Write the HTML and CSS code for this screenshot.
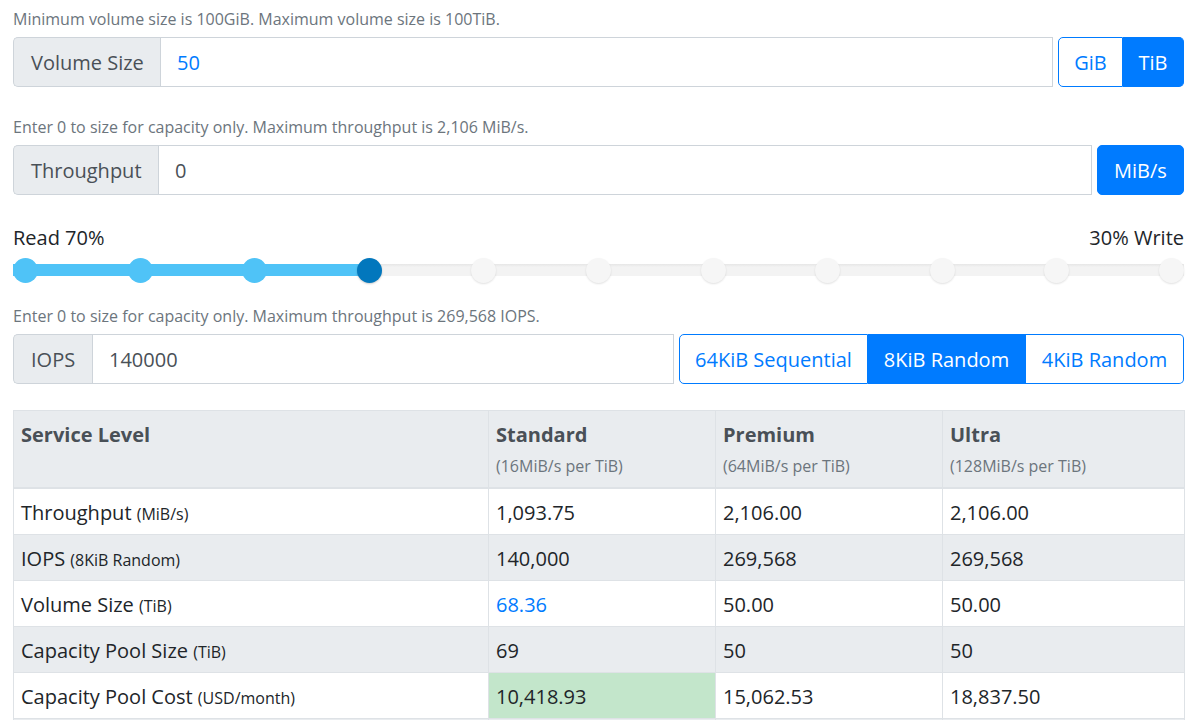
FILE: index.html
```html
<!DOCTYPE html>
<html lang="en">
<head>
<meta charset="utf-8">
<title>Volume calculator</title>
<link rel="stylesheet" href="styles.css">
</head>
<body>
<div class="page">
  <div class="section">
    <div class="help">Minimum volume size is 100GiB. Maximum volume size is 100TiB.</div>
    <div class="row">
      <div class="group">
        <span class="addon addon-vol">Volume Size</span>
        <span class="field field-blue">50</span>
      </div>
      <div class="btns">
        <span class="btn btn-outline b-gib">GiB</span>
        <span class="btn btn-fill b-tib">TiB</span>
      </div>
    </div>
  </div>

  <div class="section">
    <div class="help">Enter 0 to size for capacity only. Maximum throughput is 2,106 MiB/s.</div>
    <div class="row">
      <div class="group">
        <span class="addon addon-tp">Throughput</span>
        <span class="field">0</span>
      </div>
      <div class="btns">
        <span class="btn btn-fill btn-mibs">MiB/s</span>
      </div>
    </div>
  </div>

  <div class="slider-block">
    <div class="slider-labels">
      <span>Read 70%</span>
      <span>30% Write</span>
    </div>
    <div class="slider">
      <span class="dot on"></span>
      <span class="dot on"></span>
      <span class="dot on"></span>
      <span class="dot handle"></span>
      <span class="dot"></span>
      <span class="dot"></span>
      <span class="dot"></span>
      <span class="dot"></span>
      <span class="dot"></span>
      <span class="dot"></span>
      <span class="dot"></span>
    </div>
  </div>

  <div class="section section-iops">
    <div class="help">Enter 0 to size for capacity only. Maximum throughput is 269,568 IOPS.</div>
    <div class="row">
      <div class="group">
        <span class="addon addon-iops">IOPS</span>
        <span class="field">140000</span>
      </div>
      <div class="btns btns-iops">
        <span class="btn btn-outline b-seq">64KiB Sequential</span>
        <span class="btn btn-fill b-8k">8KiB Random</span>
        <span class="btn btn-outline b-4k">4KiB Random</span>
      </div>
    </div>
  </div>

  <table class="levels">
    <colgroup>
      <col class="c1"><col class="c2"><col class="c3"><col class="c4">
    </colgroup>
    <thead>
      <tr>
        <th>Service Level</th>
        <th>Standard<div class="sub">(16MiB/s per TiB)</div></th>
        <th>Premium<div class="sub">(64MiB/s per TiB)</div></th>
        <th>Ultra<div class="sub">(128MiB/s per TiB)</div></th>
      </tr>
    </thead>
    <tbody>
      <tr>
        <td>Throughput <small>(MiB/s)</small></td>
        <td>1,093.75</td><td>2,106.00</td><td>2,106.00</td>
      </tr>
      <tr class="alt">
        <td>IOPS <small>(8KiB Random)</small></td>
        <td>140,000</td><td>269,568</td><td>269,568</td>
      </tr>
      <tr>
        <td>Volume Size <small>(TiB)</small></td>
        <td class="blue">68.36</td><td>50.00</td><td>50.00</td>
      </tr>
      <tr class="alt">
        <td>Capacity Pool Size <small>(TiB)</small></td>
        <td>69</td><td>50</td><td>50</td>
      </tr>
      <tr>
        <td>Capacity Pool Cost <small>(USD/month)</small></td>
        <td class="best">10,418.93</td><td>15,062.53</td><td>18,837.50</td>
      </tr>
      <tr class="alt">
        <td>&nbsp;</td><td></td><td></td><td></td>
      </tr>
    </tbody>
  </table>
</div>
</body>
</html>
```

FILE: styles.css
```css
* { box-sizing: border-box; }
html, body { margin: 0; padding: 0; background: #fff; }
body {
  font-family: "Open Sans", "Noto Sans", "DejaVu Sans", sans-serif;
  font-size: 20px;
  color: #212529;
  overflow: hidden;
  height: 720px;
}
.page {
  padding: 7px 6px 0 13px;
}
.section { margin-bottom: 28px; }
.help {
  font-size: 16px;
  line-height: 24px;
  color: #6c757d;
  margin-bottom: 6px;
  white-space: nowrap;
}
.row {
  display: flex;
  gap: 5px;
  height: 50px;
}
.group {
  flex: 1;
  display: flex;
  min-width: 0;
}
.addon {
  display: flex;
  align-items: center;
  padding: 0 17px;
  background: #e9ecef;
  border: 1px solid #ced4da;
  border-right: none;
  border-radius: 5px 0 0 5px;
  color: #495057;
  white-space: nowrap;
}
.addon-vol { width: 147px; }
.addon-tp { width: 145px; }
.addon-iops { width: 79px; }
.field {
  flex: 1;
  display: flex;
  align-items: center;
  padding: 0 16px;
  border: 1px solid #ced4da;
  color: #495057;
  background: #fff;
}
.field-blue { color: #007bff; }
.btns {
  display: flex;
}
.btn {
  display: flex;
  align-items: center;
  justify-content: center;
  border: 1px solid #007bff;
  white-space: nowrap;
}
.btn-outline { color: #007bff; background: #fff; }
.btn-fill { color: #fff; background: #007bff; }
.btns .btn:first-child { border-radius: 5px 0 0 5px; }
.btns .btn:last-child { border-radius: 0 5px 5px 0; }
.btns .btn:only-child { border-radius: 5px; }
.btn + .btn { border-left: none; }
.b-gib { width: 65px; }
.b-tib { width: 61px; }
.btn-mibs { width: 87px; }
.b-seq { width: 189px; }
.b-8k { width: 158px; }
.b-4k { width: 158px; }

/* read/write slider */
.slider-block {
  margin-bottom: 21px;
}
.slider-labels {
  display: flex;
  justify-content: space-between;
  line-height: 30px;
  color: #212529;
}
.slider {
  margin-top: 4px;
  height: 26px;
  display: flex;
  justify-content: space-between;
  align-items: center;
  background:
    linear-gradient(to right, #4fc3f7 0, #4fc3f7 357px, transparent 357px) no-repeat 0 center / 100% 12px,
    linear-gradient(to bottom, #e6e6e6 0, #f3f3f3 3px, #f3f3f3 100%) no-repeat 0 center / 100% 12px;
}
.dot {
  width: 25px;
  height: 25px;
  border-radius: 50%;
  background: #f6f6f6;
  box-shadow: 0 1px 2px rgba(0,0,0,0.12);
}
.dot.on { background: #4fc3f7; box-shadow: none; }
.dot.handle { background: #0277bd; box-shadow: 0 1px 2px rgba(0,0,0,0.2); }

/* table */
.section-iops { margin-bottom: 26px; }
.levels {
  width: 1171px;
  border-collapse: collapse;
  table-layout: fixed;
}
.c1 { width: 475px; }
.c2 { width: 227px; }
.c3 { width: 227px; }
.c4 { width: 242px; }
.levels th, .levels td {
  border: 1px solid #dee2e6;
  text-align: left;
  vertical-align: top;
  padding: 9px 7px 7px;
  line-height: 29px;
  white-space: nowrap;
}
.levels thead th {
  background: #e9ecef;
  color: #495057;
  font-weight: 700;
  line-height: 30px;
  padding: 9px 7px 9px;
  border-bottom: 2px solid #dee2e6;
}
.levels .sub {
  font-weight: 400;
  font-size: 16px;
  line-height: 24px;
  margin-top: 4px;
  color: #6c757d;
}
.levels small { font-size: 16px; line-height: 1; }
.levels tr.alt td { background: #e9ecef; }
.levels td.blue { color: #007bff; }
.levels td.best { background: #c3e6cb; }
```
